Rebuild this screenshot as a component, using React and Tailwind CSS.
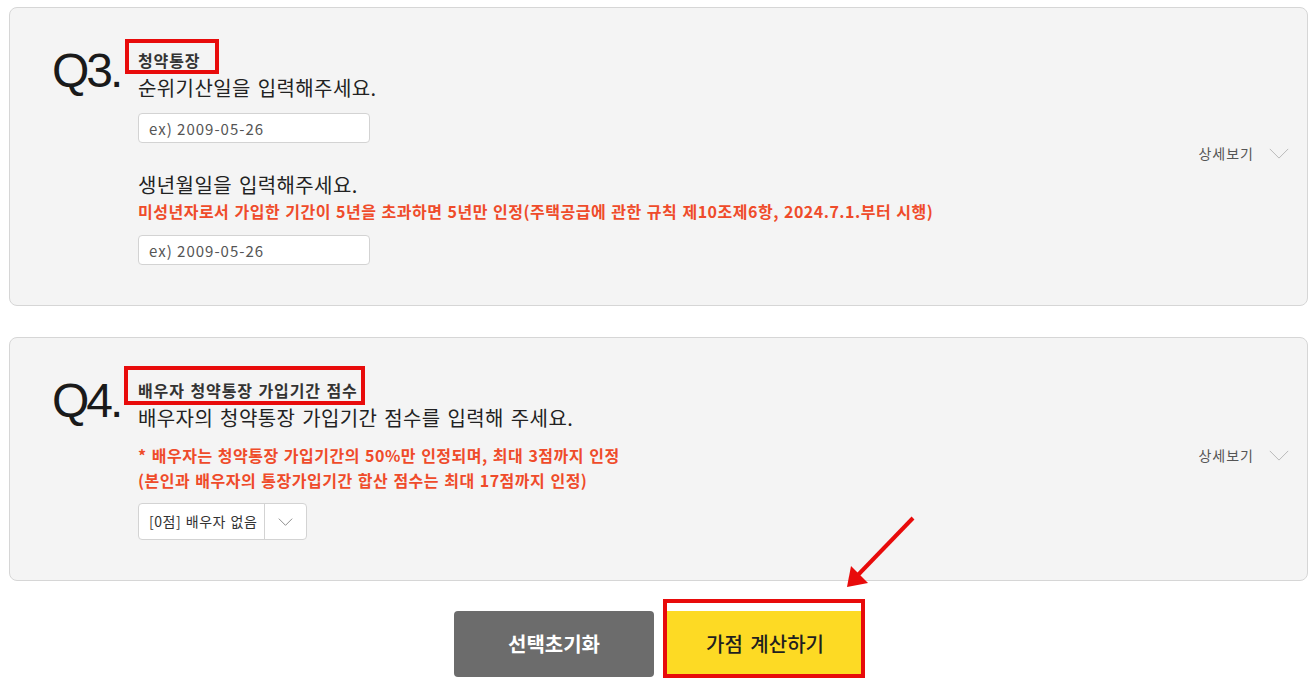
import React from 'react';

const font = { fontFamily: '"Noto Sans CJK KR", "Noto Sans", sans-serif' };

function Chevron({ className }) {
  return (
    <svg className={className} viewBox="0 0 22 12" fill="none" stroke="currentColor" strokeWidth="1">
      <path d="M1 1 L11 11 L21 1" />
    </svg>
  );
}

function DetailToggle() {
  return (
    <button className="mb-[9px] flex items-center gap-[14px] text-[14px] tracking-[1px] text-[#555]">
      상세보기
      <Chevron className="w-[22px] h-[11px] text-[#b5b5b5]" />
    </button>
  );
}

function DateInput() {
  return (
    <input
      type="text"
      placeholder="ex) 2009-05-26"
      className="w-[232px] h-[30px] bg-white border border-[#d3d3d3] rounded-[4px] px-[10px] text-[15px] tracking-[1px] placeholder:text-[#555] outline-none"
    />
  );
}

function Label({ children, box }) {
  return (
    <div className="relative inline-block text-[16px] leading-[20px] font-bold tracking-[0.9px] [word-spacing:1px] text-[#333]">
      {children}
      <span className={`absolute border-4 border-[#e80b0b] pointer-events-none ${box}`} />
    </div>
  );
}

function Question({ children, className = '' }) {
  return (
    <p className={`text-[20px] leading-[28px] tracking-[0.4px] [word-spacing:2px] text-[#222] ${className}`}>{children}</p>
  );
}

function Note({ children, className = '' }) {
  return (
    <div className={`text-[16px] font-bold tracking-[0.5px] [word-spacing:1px] text-[#ef4b2a] ${className}`}>{children}</div>
  );
}

function QuestionCard({ num, children }) {
  return (
    <div className="flex items-center bg-[#f4f4f4] border border-[#d6d6d6] rounded-[8px] pl-[42px] pr-[17px] pt-[42px] pb-[40px]">
      <div className="w-[86px] self-start -mt-[3px] text-[48px] leading-[48px] tracking-[-3px] text-[#1a1a1a]" style={{ fontFamily: '"Liberation Sans", Arial, sans-serif' }}>
        {num}
      </div>
      <div className="flex-1 flex flex-col items-start">{children}</div>
      <DetailToggle />
    </div>
  );
}

export default function App() {
  return (
    <div className="relative w-full h-[685px] bg-white pt-[7px] pl-[9px] pr-[8px]" style={font}>
      <QuestionCard num="Q3.">
        <Label box="-left-[13px] -right-[19px] -top-[11px] -bottom-[4px]">청약통장</Label>
        <Question className="mt-[4px]">순위기산일을 입력해주세요.</Question>
        <div className="mt-[11px]"><DateInput /></div>
        <Question className="mt-[28px]">생년월일을 입력해주세요.</Question>
        <Note className="mt-[1px] leading-[22px]">
          미성년자로서 가입한 기간이 5년을 초과하면 5년만 인정(주택공급에 관한 규칙 제10조제6항, 2024.7.1.부터 시행)
        </Note>
        <div className="mt-[13px]"><DateInput /></div>
      </QuestionCard>

      <div className="mt-[31px]">
        <QuestionCard num="Q4.">
          <Label box="-left-[14px] -right-[7px] -top-[14px] -bottom-[5px]">배우자 청약통장 가입기간 점수</Label>
          <Question className="mt-[4px]">배우자의 청약통장 가입기간 점수를 입력해 주세요.</Question>
          <Note className="mt-[11px] leading-[25px]">
            <p>* 배우자는 청약통장 가입기간의 50%만 인정되며, 최대 3점까지 인정</p>
            <p>(본인과 배우자의 통장가입기간 합산 점수는 최대 17점까지 인정)</p>
          </Note>
          <div className="mt-[10px] flex items-stretch h-[37px] w-[169px] bg-white border border-[#d3d3d3] rounded-[4px]">
            <span className="flex items-center pl-[10px] w-[126px] text-[14px] tracking-[0.5px] [word-spacing:1px] text-[#333] border-r border-[#d3d3d3]">[0점] 배우자 없음</span>
            <span className="flex-1 flex items-center justify-center">
              <Chevron className="w-[15px] h-[8px] text-[#555]" />
            </span>
          </div>
        </QuestionCard>
      </div>

      <div className="mt-[30px] flex justify-center gap-[11px] pl-[2px]">
        <button className="w-[200px] h-[66px] rounded-[4px] bg-[#6c6c6c] text-white text-[20px] font-bold">선택초기화</button>
        <div className="relative">
          <button className="w-[200px] h-[66px] bg-[#fdda24] text-[#1f1f1f] text-[20px] font-medium [word-spacing:3px]">가점 계산하기</button>
          <span className="absolute -left-[2px] right-0 -top-[12px] -bottom-[1px] border-4 border-[#e80b0b] pointer-events-none" />
        </div>
      </div>

      <svg className="absolute left-0 top-0 pointer-events-none" width="1316" height="685">
        <line x1="913" y1="518" x2="856" y2="577" stroke="#e80b0b" strokeWidth="4" />
        <polygon points="847,587 851,566 868,583" fill="#e80b0b" />
      </svg>
    </div>
  );
}
